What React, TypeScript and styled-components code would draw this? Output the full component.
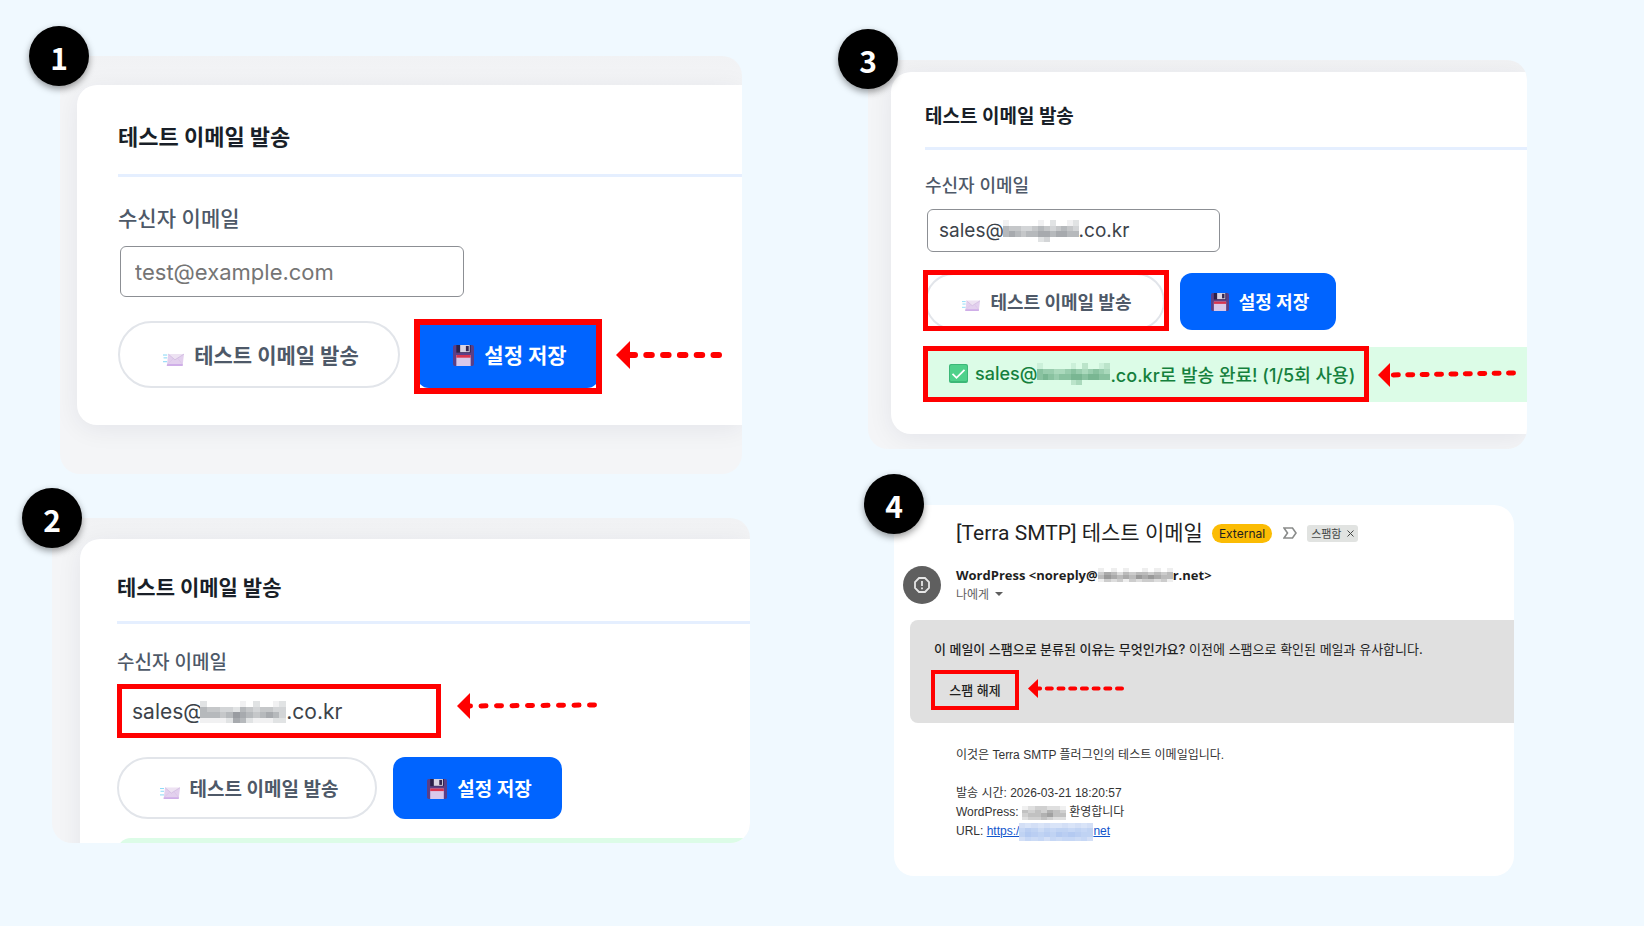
import React from "react";
import styled, { createGlobalStyle, css } from "styled-components";

const GlobalStyle = createGlobalStyle`
  *, *::before, *::after { box-sizing: border-box; }
  body {
    margin: 0;
    background: #f0f9ff;
    font-family: Inter, "Noto Sans CJK KR", sans-serif;
  }
  h2, p { margin: 0; }
  button, input { font-family: inherit; }
`;

/* ---------- sizes of the three settings captures ---------- */

interface Size {
  title: number;
  titleLine: number;
  titleTop: number;
  titleBottom: number;
  label: number;
  labelLine: number;
  labelTop: number;
  labelBottom: number;
  input: number;
  inputWidth: number;
  inputHeight: number;
  inputPad: number;
  rowTop: number;
  button: number;
  buttonHeight: number;
  pillWidth: number;
  saveWidth: number;
  gap: number;
  icon: number;
  padLeft: number;
}

const large: Size = {
  title: 22, titleLine: 32, titleTop: 36, titleBottom: 21,
  label: 21, labelLine: 28, labelTop: 28, labelBottom: 13,
  input: 22, inputWidth: 344, inputHeight: 51, inputPad: 14,
  rowTop: 24, button: 21, buttonHeight: 67, pillWidth: 282, saveWidth: 182,
  gap: 17, icon: 21, padLeft: 41,
};

const medium: Size = {
  title: 21, titleLine: 30, titleTop: 34, titleBottom: 18,
  label: 19, labelLine: 26, labelTop: 26, labelBottom: 11,
  input: 21, inputWidth: 320, inputHeight: 48, inputPad: 12,
  rowTop: 22, button: 19, buttonHeight: 62, pillWidth: 260, saveWidth: 169,
  gap: 16, icon: 20, padLeft: 37,
};

const small: Size = {
  title: 19, titleLine: 28, titleTop: 31, titleBottom: 16,
  label: 18, labelLine: 24, labelTop: 24, labelBottom: 11,
  input: 19, inputWidth: 293, inputHeight: 43, inputPad: 11,
  rowTop: 21, button: 18, buttonHeight: 57, pillWidth: 240, saveWidth: 156,
  gap: 15, icon: 18, padLeft: 34,
};

/* ---------- layout ---------- */

const Page = styled.main`
  display: grid;
  grid-template-columns: minmax(0, 1fr) minmax(0, 1fr);
  min-height: 100vh;
`;

const Column = styled.div<{ $top: number; $gap: number }>`
  display: flex;
  flex-direction: column;
  gap: ${(p) => p.$gap}px;
  padding-top: ${(p) => p.$top}px;
  padding-bottom: 40px;
`;

const Step = styled.section<{ $left: number; $right: number }>`
  position: relative;
  margin: 0 ${(p) => p.$right}px 0 ${(p) => p.$left}px;
`;

const Badge = styled.span<{ $x: number; $y: number }>`
  position: absolute;
  left: ${(p) => p.$x}px;
  top: ${(p) => p.$y}px;
  z-index: 2;
  display: flex;
  align-items: center;
  justify-content: center;
  width: 60px;
  height: 60px;
  padding-top: 2px;
  border-radius: 50%;
  background: #000;
  color: #fff;
  font: 700 30px/44px "Noto Sans CJK KR", sans-serif;
  box-shadow: 0 3px 7px rgba(0, 0, 0, 0.4);
`;

const Capture = styled.div<{ $pad: string }>`
  overflow: hidden;
  border-radius: 20px;
  padding: ${(p) => p.$pad};
  background: linear-gradient(#f1f2f4, #f4f5f7 40px);
`;

const Card = styled.div<{ $s: Size; $bottom: number }>`
  padding: ${(p) => p.$s.titleTop}px 0 ${(p) => p.$bottom}px ${(p) => p.$s.padLeft}px;
  border-radius: 20px 0 0 20px;
  background: #fff;
  box-shadow: 0 4px 26px rgba(20, 20, 50, 0.07);
`;

const Title = styled.h2<{ $s: Size }>`
  padding-bottom: ${(p) => p.$s.titleBottom}px;
  border-bottom: 3px solid #e5efff;
  color: #191f28;
  font-size: ${(p) => p.$s.title}px;
  line-height: ${(p) => p.$s.titleLine}px;
  font-weight: 700;
`;

const Label = styled.label<{ $s: Size }>`
  display: block;
  margin: ${(p) => p.$s.labelTop}px 0 ${(p) => p.$s.labelBottom}px;
  color: #4e5968;
  font-size: ${(p) => p.$s.label}px;
  line-height: ${(p) => p.$s.labelLine}px;
  font-weight: 500;
`;

const Row = styled.div<{ $gap: number; $top?: number }>`
  display: flex;
  align-items: center;
  gap: ${(p) => p.$gap}px;
  margin-top: ${(p) => p.$top ?? 0}px;
`;

const Field = styled.div`
  position: relative;
  flex: none;
  margin-left: 2px;
`;

const TextInput = styled.input<{ $s: Size }>`
  display: block;
  width: ${(p) => p.$s.inputWidth}px;
  height: ${(p) => p.$s.inputHeight}px;
  padding: 0 ${(p) => p.$s.inputPad}px;
  border: 1px solid #8c8f94;
  border-radius: 6px;
  background: #fff;
  color: #3c434a;
  font-size: ${(p) => p.$s.input}px;
  outline: none;
  &::placeholder { color: #757575; opacity: 1; }
`;

const FieldMask = styled.span<{ $x: number; $y: number }>`
  position: absolute;
  left: ${(p) => p.$x}px;
  top: ${(p) => p.$y}px;
  display: flex;
`;

const buttonBase = css<{ $s: Size }>`
  display: flex;
  align-items: center;
  justify-content: center;
  flex: none;
  gap: 10px;
  height: ${(p) => p.$s.buttonHeight}px;
  padding: 0 0 2px 4px;
  font-size: ${(p) => p.$s.button}px;
  font-weight: 700;
  white-space: nowrap;
  svg { margin-top: 3px; }
`;

const SendButton = styled.button<{ $s: Size }>`
  ${buttonBase}
  width: ${(p) => p.$s.pillWidth}px;
  border: 2px solid #e2e5ea;
  border-radius: 34px;
  background: #fff;
  color: #4e5968;
`;

const SaveButton = styled.button<{ $s: Size }>`
  ${buttonBase}
  width: ${(p) => p.$s.saveWidth}px;
  border: 0;
  border-radius: 12px;
  background: #0064ff;
  color: #fff;
`;

/* Red frame drawn over the control that a step points at */
const Highlight = styled.div<{ $inset: string; $w: number }>`
  position: relative;
  display: flex;
  flex: none;
  &::after {
    content: "";
    position: absolute;
    inset: ${(p) => p.$inset};
    border: ${(p) => p.$w}px solid #f00;
    pointer-events: none;
  }
`;

const Notice = styled.div`
  display: flex;
  align-items: center;
  gap: 11px;
  height: 55px;
  margin-top: 17px;
  background: #dcfce7;
`;

const NoticeText = styled.p`
  display: flex;
  align-items: center;
  height: 55px;
  padding: 0 12px 2px 24px;
  color: #15803d;
  font-size: 18px;
  font-weight: 500;
  white-space: nowrap;
  svg:first-child { margin-right: 7px; }
`;

const NoticeEdge = styled.div`
  height: 52px;
  margin: 19px 0 -47px;
  border-radius: 14px 0 0 14px;
  background: #dcfce7;
`;

const ArrowSvg = styled.svg<{ $lift: number }>`
  flex: none;
  margin-bottom: ${(p) => p.$lift}px;
`;

/* ---------- mail capture ---------- */

const Mail = styled.article`
  overflow: hidden;
  padding: 12px 0 35px;
  border-radius: 20px;
  background: #fff;
  color: #1f1f1f;
`;

const Subject = styled.div`
  display: flex;
  align-items: center;
  height: 32px;
  padding-left: 62px;
`;

const SubjectText = styled.h2`
  font: 400 21px/32px Roboto, "Noto Sans CJK KR", sans-serif;
  white-space: nowrap;
`;

const External = styled.span`
  margin-left: 9px;
  padding: 0 7px;
  border-radius: 10px;
  background: #fbbc04;
  font: 400 12px/19px Inter, sans-serif;
`;

const ImportanceIcon = styled.svg`
  margin: 0 10px 0 11px;
`;

const Tag = styled.span`
  display: flex;
  align-items: center;
  gap: 5px;
  height: 17px;
  padding: 0 4px;
  border-radius: 3px;
  background: #e1e3e1;
  color: #444746;
  font: 400 11px/17px "Noto Sans CJK KR", sans-serif;
`;

const TagClose = styled.button`
  display: flex;
  padding: 0;
  border: 0;
  background: none;
  color: inherit;
`;

const Sender = styled.div`
  display: flex;
  gap: 15px;
  margin-top: 17px;
  padding-left: 9px;
`;

const Avatar = styled.span`
  display: flex;
  align-items: center;
  justify-content: center;
  width: 38px;
  height: 38px;
  border-radius: 50%;
  background: #5f5f5f;
`;

const From = styled.p`
  display: flex;
  align-items: center;
  font: 700 13px/18px "Open Sans", sans-serif;
  white-space: nowrap;
`;

const ToMe = styled.p`
  display: flex;
  align-items: center;
  gap: 6px;
  color: #5e5e5e;
  font: 400 12px/19px "Noto Sans CJK KR", sans-serif;
`;

const SpamBox = styled.div`
  margin: 16px 0 0 16px;
  padding: 20px 24px 15px;
  border-radius: 8px 0 0 8px;
  background: #e0e0e0;
  font: 400 13px/18px Inter, "Noto Sans CJK KR", sans-serif;
  strong { font-weight: 500; }
`;

const SpamButton = styled.button`
  width: 82px;
  height: 36px;
  padding: 0;
  border: 0;
  border-radius: 4px;
  background: transparent;
  color: #1f1f1f;
  font: 500 13px/18px Inter, "Noto Sans CJK KR", sans-serif;
`;

const MailBody = styled.div`
  margin: 23px 0 0 62px;
  color: #333;
  font: 400 12px/19px "Liberation Sans", "Noto Sans CJK KR", sans-serif;
  a { color: #1155cc; }
`;

const Line = styled.p<{ $gap?: boolean }>`
  display: flex;
  align-items: center;
  height: 19px;
  margin-top: ${(p) => (p.$gap ? 19 : 0)}px;
  white-space: pre;
`;

const MailLink = styled.a`
  display: flex;
  align-items: center;
`;

/* ---------- drawings ---------- */

/* Pixelated cover for a hidden word: each digit is a cell's strength */
function Mosaic({ rows, width, height, color = "#50565e", back = "#fff" }: {
  rows: string[]; width: number; height: number; color?: string; back?: string;
}) {
  const cols = rows[0].length;
  return (
    <svg width={width} height={height} viewBox={`0 0 ${cols} ${rows.length}`}
      preserveAspectRatio="none" shapeRendering="crispEdges" aria-hidden="true">
      <rect width={cols} height={rows.length} fill={back} />
      {rows.map((r, y) => r.split("").map((d, x) => (
        <rect key={`${x}-${y}`} x={x} y={y} width="1" height="1" fill={color} opacity={Number(d) / 12} />
      )))}
    </svg>
  );
}

const wordA = ["2000001020012", "5443325434433", "5554576545653", "1111265211122"];
const wordB = ["1000001020012", "5443345434543", "5654556656655", "0000002300000"];
const wordC = ["101010010101", "354243443434", "465454656544", "132313233231"];
const wordD = ["1233221", "4343543", "3445644", "2334322"];

function Arrow({ width, height, head, stroke, dash, tilt = 0, lift = 0 }: {
  width: number; height: number; head: number; stroke: number; dash: string; tilt?: number; lift?: number;
}) {
  const mid = height / 2;
  const end = width - stroke / 2;
  return (
    <ArrowSvg $lift={lift} width={width} height={height} viewBox={`0 0 ${width} ${height}`} aria-hidden="true">
      <path d={`M0 ${mid}L${head} 0V${height}Z`} fill="#f00" />
      <path d={`M${end} ${mid - tilt}L${head} ${mid}`} stroke="#f00" strokeWidth={stroke}
        strokeLinecap="round" strokeDasharray={dash} fill="none" />
    </ArrowSvg>
  );
}

function Envelope({ size }: { size: number }) {
  return (
    <svg width={size} height={size} viewBox="0 0 22 22" aria-hidden="true">
      <path d="M0 10.500h4M1 13.500h3M0 17.500h4" stroke="#7fd4f5" strokeWidth="1" strokeLinecap="round" />
      <path d="M5.500 9.500H22L20.500 22H4Z" fill="#e3d0ee" />
      <path d="M4.300 20l-.3 2h16.500l.2-2Z" fill="#cfaee8" />
      <path d="M5.500 9.500l7 6 9.500-6" fill="#ede2f2" stroke="#cbb4dc" strokeWidth=".7" />
      <path d="M4.500 20.500l6-6M20.500 20.500l-5-6.500" stroke="#d5bfe4" strokeWidth=".5" />
    </svg>
  );
}

function Floppy({ size }: { size: number }) {
  return (
    <svg width={size} height={size} viewBox="0 0 22 22" aria-hidden="true">
      <path d="M2 0h18a2 2 0 0 1 2 2v18a2 2 0 0 1-2 2H2a2 2 0 0 1-2-2V2a2 2 0 0 1 2-2Z" fill="#5b3f86" />
      <path d="M3.500 0h15v8h-15Z" fill="#2b2048" />
      <path d="M7.500 0h10v7.500h-10Z" fill="#d8d3e2" />
      <path d="M13.500 1h3v5.500h-3Z" fill="#33264f" />
      <path d="M3.500 10.500h15V22h-15Z" fill="#d9c8ea" />
      <path d="M3.500 10.500h15v2.800h-15Z" fill="#d8344f" />
    </svg>
  );
}

function CheckMark() {
  return (
    <svg width="19" height="19" viewBox="0 0 19 19" aria-hidden="true">
      <rect width="19" height="19" rx="2" fill="#3cb878" />
      <rect x="1" y="1" width="17" height="16" rx="1.500" fill="#4fd18b" />
      <path d="M3.500 9.800l4 4 8-8" stroke="#fff" strokeWidth="1.800" fill="none" />
    </svg>
  );
}

/* ---------- parts ---------- */

function Send({ s }: { s: Size }) {
  return (
    <SendButton type="button" $s={s}>
      <Envelope size={s.icon} />
      테스트 이메일 발송
    </SendButton>
  );
}

function Save({ s }: { s: Size }) {
  return (
    <SaveButton type="button" $s={s}>
      <Floppy size={s.icon} />
      설정 저장
    </SaveButton>
  );
}

const hidden = (n: number) => `sales@${"\u00a0".repeat(n)}.co.kr`;

export default function App() {
  return (
    <>
      <GlobalStyle />
      <Page>
        <Column $top={56} $gap={44}>
          <Step $left={60} $right={80}>
            <Badge $x={-31} $y={-30}>1</Badge>
            <Capture $pad="29px 0 49px 17px">
              <Card $s={large} $bottom={37}>
                <Title $s={large}>테스트 이메일 발송</Title>
                <Label $s={large} htmlFor="mail-1">수신자 이메일</Label>
                <Field>
                  <TextInput $s={large} id="mail-1" type="text" placeholder="test@example.com" />
                </Field>
                <Row $gap={large.gap} $top={large.rowTop}>
                  <Send s={large} />
                  <Highlight $inset="-2px -3px -6px" $w={6}>
                    <Save s={large} />
                  </Highlight>
                  <Arrow width={106} height={28} head={14} stroke={6} dash="5.5 11.3" />
                </Row>
              </Card>
            </Capture>
          </Step>

          <Step $left={52} $right={72}>
            <Badge $x={-30} $y={-30}>2</Badge>
            <Capture $pad="21px 0 0 28px">
              <Card $s={medium} $bottom={0}>
                <Title $s={medium}>테스트 이메일 발송</Title>
                <Label $s={medium} htmlFor="mail-2">수신자 이메일</Label>
                <Row $gap={18}>
                  <Highlight $inset="-3px -2px -3px 0" $w={5}>
                    <Field>
                      <TextInput $s={medium} id="mail-2" type="text" defaultValue={hidden(14)} />
                      <FieldMask $x={81} $y={14}>
                        <Mosaic rows={wordA} width={86} height={22} />
                      </FieldMask>
                    </Field>
                  </Highlight>
                  <Arrow width={140} height={26} head={13} stroke={5} dash="5 10.5" tilt={1} lift={10} />
                </Row>
                <Row $gap={medium.gap} $top={medium.rowTop}>
                  <Send s={medium} />
                  <Save s={medium} />
                </Row>
                <NoticeEdge />
              </Card>
            </Capture>
          </Step>
        </Column>

        <Column $top={60} $gap={56}>
          <Step $left={46} $right={117}>
            <Badge $x={-30} $y={-31}>3</Badge>
            <Capture $pad="12px 0 15px 23px">
              <Card $s={small} $bottom={32}>
                <Title $s={small}>테스트 이메일 발송</Title>
                <Label $s={small} htmlFor="mail-3">수신자 이메일</Label>
                <Field>
                  <TextInput $s={small} id="mail-3" type="text" defaultValue={hidden(14)} />
                  <FieldMask $x={76} $y={11}>
                    <Mosaic rows={wordB} width={76} height={22} />
                  </FieldMask>
                </Field>
                <Row $gap={small.gap} $top={small.rowTop}>
                  <Highlight $inset="-3px -4px -1px -2px" $w={5}>
                    <Send s={small} />
                  </Highlight>
                  <Save s={small} />
                </Row>
                <Notice>
                  <Highlight $inset="-1px -2px 0" $w={5}>
                    <NoticeText>
                      <CheckMark />
                      sales@
                      <Mosaic rows={wordB} width={73} height={22} color="#15703d" back="#dcfce7" />
                      .co.kr로 발송 완료! (1/5회 사용)
                    </NoticeText>
                  </Highlight>
                  <Arrow width={138} height={24} head={12} stroke={5} dash="5 9.4" tilt={2} />
                </Notice>
              </Card>
            </Capture>
          </Step>

          <Step $left={72} $right={130}>
            <Badge $x={-30} $y={-31}>4</Badge>
            <Mail>
              <Subject>
                <SubjectText>[Terra SMTP] 테스트 이메일</SubjectText>
                <External>External</External>
                <ImportanceIcon width="14" height="12" viewBox="0 0 14 12" aria-hidden="true">
                  <path d="M1 1h8.500l3.500 5-3.500 5H1l3.500-5Z" fill="none" stroke="#8a8c8b" strokeWidth="1.600" />
                </ImportanceIcon>
                <Tag>
                  스팸함
                  <TagClose type="button" aria-label="스팸함 라벨 삭제">
                    <svg width="7" height="7" viewBox="0 0 7 7" aria-hidden="true">
                      <path d="M.5 .5l6 6M6.500 .5l-6 6" stroke="currentColor" strokeWidth="1" />
                    </svg>
                  </TagClose>
                </Tag>
              </Subject>
              <Sender>
                <Avatar>
                  <svg width="16" height="16" viewBox="0 0 16 16" aria-hidden="true">
                    <path d="M5 1h6l4 4v6l-4 4H5l-4-4V5Z" fill="none" stroke="#e6e6e6" strokeWidth="1.800" />
                    <path d="M8 4v5M8 10.500v1.800" stroke="#e6e6e6" strokeWidth="1.800" />
                  </svg>
                </Avatar>
                <div>
                  <From>
                    WordPress &lt;noreply@
                    <Mosaic rows={wordC} width={75} height={14} color="#333" />
                    r.net&gt;
                  </From>
                  <ToMe>
                    나에게
                    <svg width="8" height="4" viewBox="0 0 8 4" aria-hidden="true">
                      <path d="M0 0h8L4 4Z" fill="#5e5e5e" />
                    </svg>
                  </ToMe>
                </div>
              </Sender>
              <SpamBox>
                <p><strong>이 메일이 스팸으로 분류된 이유는 무엇인가요?</strong> 이전에 스팸으로 확인된 메일과 유사합니다.</p>
                <Row $gap={12} $top={14}>
                  <Highlight $inset="-2px -3px" $w={4}>
                    <SpamButton type="button">스팸 해제</SpamButton>
                  </Highlight>
                  <Arrow width={96} height={19} head={10} stroke={4} dash="5 6.7" lift={3} />
                </Row>
              </SpamBox>
              <MailBody>
                <Line>이것은 Terra SMTP 플러그인의 테스트 이메일입니다.</Line>
                <Line $gap>발송 시간: 2026-03-21 18:20:57</Line>
                <Line>
                  {"WordPress: "}
                  <Mosaic rows={wordD} width={44} height={14} color="#444" />
                  {" 환영합니다"}
                </Line>
                <Line>
                  {"URL: "}
                  <MailLink href="#mail">
                    https:/
                    <Mosaic rows={wordC} width={74} height={18} color="#8fb0ea" back="#d9e4f8" />
                    net
                  </MailLink>
                </Line>
              </MailBody>
            </Mail>
          </Step>
        </Column>
      </Page>
    </>
  );
}
